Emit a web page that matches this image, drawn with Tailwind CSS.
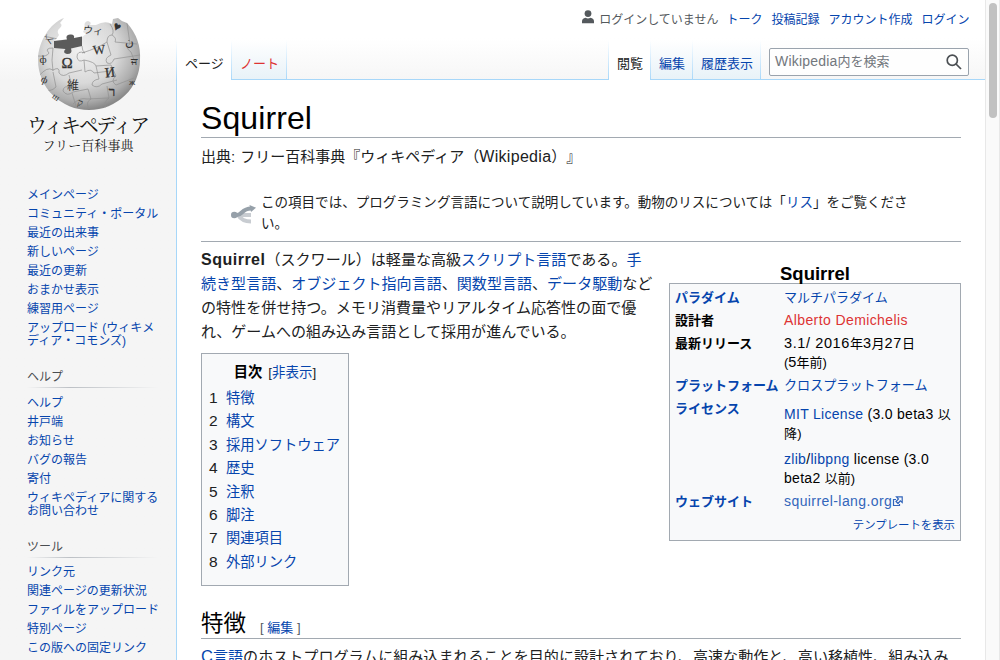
<!DOCTYPE html>
<html lang="ja">
<head>
<meta charset="utf-8">
<title>Squirrel - Wikipedia</title>
<script src="https://cdn.jsdelivr.net/npm/@tailwindcss/browser@4"></script>
</head>
<body class="h-[660px] w-[1000px] overflow-hidden bg-white font-['Liberation_Sans','Noto_Sans_CJK_JP',sans-serif] text-[#202122] [text-spacing-trim:space-all]">
<div class="flex h-[660px] whitespace-nowrap">

  <!-- Sidebar -->
  <aside class="h-full w-44 shrink-0 bg-linear-to-b from-white from-[38px] to-[#f5f5f5] to-[80px] pl-[27px] text-xs leading-[13px] text-[#0645ad]">
    <div class="h-[189px]">
      <svg width="126" height="160" viewBox="27 0 126 160">
        <defs>
          <radialGradient id="globe" cx=".42" cy=".35" r=".65">
            <stop offset="0" stop-color="#f1f1f1"/><stop offset=".55" stop-color="#d9d9d9"/><stop offset=".85" stop-color="#adadad"/><stop offset="1" stop-color="#888"/>
          </radialGradient>
          <clipPath id="ball"><path d="M64 18L60 23Q63 25 60 28Q56 31 59 35Q56 40 54 41L82 37L86 34L83 32L85 28Q83 22 88 21Q92 22 90 25L96 25Q105 20 112 24L113 19L118 18Q122 22 127 23A51 51 0 0 1 140 60A51 50 0 0 1 38 60C38 42 50 23 64 18Z"/></clipPath>
        </defs>
        <path fill="url(#globe)" d="M64 18L60 23Q63 25 60 28Q56 31 59 35Q56 40 54 41L82 37L86 34L83 32L85 28Q83 22 88 21Q92 22 90 25L96 25Q105 20 112 24L113 19L118 18Q122 22 127 23A51 51 0 0 1 140 60A51 50 0 0 1 38 60C38 42 50 23 64 18Z"/>
        <path fill="#5b5b5b" d="M54 41L67 39.5Q65 35 70 34.5Q75 34 74 38L82 36.5L82 46L71 48.5Q73 54 67 54Q62 53 65.5 49L54 48Z"/>
        <g clip-path="url(#ball)" fill="none" stroke="#909090" stroke-width=".7">
          <path d="M38 56Q47 57 49 53Q44 48 53 48M53 48Q51 61 53 71M39 76Q47 66 53 70Q60 66 59 73Q63 78 69 73L82 70M82 46Q82 51 85 53Q77 50 77 57Q78 63 84 60L85 72M82 53Q98 48 107 42Q107 35 112 35Q117 38 115 42L137 44M107 42L111 55Q104 58 107 63Q112 65 114 59L140 55M111 65L116 76Q110 81 116 85L134 78M84 60Q95 62 96 66L111 65M85 72Q91 68 94 73L110 71M96 66L99 79Q92 80 92 85Q97 89 102 84L117 80M69 75L72 87Q63 85 63 91Q67 97 73 92L88 89M53 72L56 87Q50 93 43 89M72 93L76 106M88 89L91 99Q85 102 89 109M107 86L109 98Q103 102 106 109M73 104Q80 97 87 99L109 98M110 24Q115 31 112 35M127 23L130 44Q124 47 131 52L136 65M43 36L58 39M42 89L57 101"/>
        </g>
        <g fill="#333" font-family="Liberation Serif, Noto Sans CJK JP, serif" text-anchor="middle">
          <text x="67" y="68" font-size="15" stroke="#333" stroke-width=".3">Ω</text>
          <text x="99" y="54" font-size="13" transform="rotate(-5 99 50)" stroke="#333" stroke-width=".2">W</text>
          <text x="110" y="77" font-size="14" transform="rotate(-7 110 72)" stroke="#333" stroke-width=".3">И</text>
          <text x="73" y="90" font-size="12">維</text>
          <text x="93" y="34" font-size="10" transform="rotate(6 93 31)">ウィ</text>
          <text x="112" y="96" font-size="13" stroke="#333" stroke-width=".4">ר</text>
          <text x="48" y="43" font-size="9" transform="rotate(24 48 40)">ᔌ</text>
          <text x="43" y="63" font-size="11">ф</text>
          <text x="45" y="83" font-size="10" transform="rotate(25 45 79)">ф</text>
          <text x="117" y="31" font-size="13" transform="rotate(25 117 27)">♥</text>
          <text x="129" y="46" font-size="12">ن</text>
          <text x="134" y="65" font-size="10">ਜ</text>
          <text x="132" y="85" font-size="9">ж</text>
          <text x="56" y="100" font-size="9" transform="rotate(34 56 97)">ш</text>
          <text x="80" y="106" font-size="10" transform="rotate(15 80 103)">ק</text>
        </g>
        <text x="27" y="133" font-size="20" textLength="123" lengthAdjust="spacing" fill="#111" font-family="Noto Serif CJK JP, Noto Sans CJK JP, serif">ウィキペディア</text>
        <text x="42.5" y="150" font-size="13" textLength="91" lengthAdjust="spacing" fill="#222" font-family="Noto Serif CJK JP, Noto Sans CJK JP, serif">フリー百科事典</text>
      </svg>
    </div>
    <nav>
      <ul class="flex flex-col gap-1.5">
        <li>メインページ</li><li>コミュニティ・ポータル</li><li>最近の出来事</li><li>新しいページ</li><li>最近の更新</li><li>おまかせ表示</li><li>練習用ページ</li><li>アップロード (ウィキメ<br>ディア・コモンズ)</li>
      </ul>
      <h3 class="mt-[23px] text-[#4a4d51]">ヘルプ</h3>
      <div class="mt-[3px] h-px w-[131px] bg-linear-to-r from-transparent via-[#bcc0c5] via-33% to-transparent"></div>
      <ul class="mt-[9px] flex flex-col gap-1.5">
        <li>ヘルプ</li><li>井戸端</li><li>お知らせ</li><li>バグの報告</li><li>寄付</li><li>ウィキペディアに関する<br>お問い合わせ</li>
      </ul>
      <h3 class="mt-[23px] text-[#4a4d51]">ツール</h3>
      <div class="mt-[3px] h-px w-[131px] bg-linear-to-r from-transparent via-[#bcc0c5] via-33% to-transparent"></div>
      <ul class="mt-2 flex flex-col gap-1.5">
        <li>リンク元</li><li>関連ページの更新状況</li><li>ファイルをアップロード</li><li>特別ページ</li><li>この版への固定リンク</li>
      </ul>
    </nav>
  </aside>
  <div class="w-px shrink-0 bg-linear-to-b from-white from-[40px] to-[#a7d7f9] to-[80px]"></div>

  <div class="flex w-[808px] shrink-0 flex-col">
    <!-- Header -->
    <header class="h-20 shrink-0 bg-linear-to-b from-white from-[38px] to-[#f6f6f6] text-[#0645ad]">
      <div class="flex h-10 items-start justify-end pr-[15.5px] pt-[11px] text-xs leading-[18px]">
        <svg class="-mt-px mr-[5px]" width="12" height="14" viewBox="0 0 12 14" fill="#54595d"><circle cx="6" cy="3.6" r="3.4"/><path d="M0 13.3V11.5Q0 8.3 3.6 7.8Q6 9.3 8.4 7.8Q12 8.3 12 11.5V13.3Z"/></svg>
        <span class="mr-2 text-[#54595d]">ログインしていません</span><span class="mr-[9px]">トーク</span><span class="mr-[9px]">投稿記録</span><span class="mr-[9px]">アカウント作成</span><span>ログイン</span>
      </div>
      <div class="flex h-10 text-[13px] leading-[48px]">
        <div class="w-[54px] bg-white pl-2 text-[#202122]">ページ</div>
        <div class="w-px bg-linear-to-b from-white to-[#a7d7f9]"></div>
        <div class="h-10 w-[54px] border-b border-[#a7d7f9] bg-linear-to-b from-white to-[#e8f2f8] pl-2 text-[#dd3333]">ノート</div>
        <div class="w-px bg-linear-to-b from-white to-[#a7d7f9]"></div>
        <div class="flex-1 border-b border-[#a7d7f9]"></div>
        <div class="w-px bg-linear-to-b from-white to-[#a7d7f9]"></div>
        <div class="w-[41px] bg-white pl-2 text-[#202122]">閲覧</div>
        <div class="w-px bg-linear-to-b from-white to-[#a7d7f9]"></div>
        <div class="h-10 w-[41px] border-b border-[#a7d7f9] bg-linear-to-b from-white to-[#e8f2f8] pl-2">編集</div>
        <div class="w-px bg-linear-to-b from-white to-[#a7d7f9]"></div>
        <div class="h-10 w-[67px] border-b border-[#a7d7f9] bg-linear-to-b from-white to-[#e8f2f8] pl-2">履歴表示</div>
        <div class="w-px bg-linear-to-b from-white to-[#a7d7f9]"></div>
        <div class="flex w-[224px] border-b border-[#a7d7f9] pl-2 pt-2">
          <div class="flex h-7 w-[200px] items-center justify-between rounded-[2px] border border-[#9aa3ad] bg-white/80 pl-[5px] pr-[6px] leading-[26px] text-[#72777d]">
            <span class="-mt-px"><span class="text-[14px] tracking-[0.2px]">Wikipedia</span>内を検索</span>
            <svg width="16" height="16" viewBox="0 0 16 16" fill="none" stroke="#4b4f53" stroke-width="1.7"><circle cx="6.3" cy="6.3" r="5.1"/><path d="M10 10L15 15"/></svg>
          </div>
        </div>
      </div>
    </header>

    <!-- Article -->
    <main class="h-[580px] w-[784px] overflow-hidden pl-6 text-[15px] leading-6">
      <h1 class="h-[58px] border-b border-[#a2a9b1] pt-[18px] text-[32px] leading-10 tracking-[0.1px] text-black">Squirrel</h1>
      <p class="mt-[7px]">出典: <span class="pl-px">フリー百科事典『ウィキペディア（<span class="text-[16px] tracking-[0.3px]">Wikipedia</span>）』</span></p>
      <div class="mt-[23px] flex h-[50px] border-b border-[#a2a9b1] pl-[30px] text-[13.54px] leading-[21px]">
        <svg class="mr-[5px] mt-[13px]" width="25" height="20" viewBox="0 0 25 20" fill="none"><path d="M3 10H20M7 10Q11 16.5 20 16.5" stroke="#c8ccd1" stroke-width="4"/><path d="M3 10H6C11 10 11 3.5 20 3.5" stroke="#96a0a9" stroke-width="4.2"/><circle cx="3.3" cy="10" r="3.3" fill="#96a0a9"/><path d="M18.5 0L25 2.7L20 7Z" fill="#96a0a9"/></svg>
        <p>この項目では、プログラミング言語について説明しています。動物のリスについては「<a class="text-[#0645ad]">リス</a>」をご覧くださ<br>い。</p>
      </div>

      <div class="flex h-[365px] justify-between">
        <div>
          <p class="mt-[6px] text-[15.05px]"><b class="text-[16px] tracking-[0.5px]">Squirrel</b>（スクワール）は軽量な高級<a class="text-[#0645ad]">スクリプト言語</a>である。<a class="text-[#0645ad]">手<br>続き型言語</a>、<a class="text-[#0645ad]">オブジェクト指向言語</a>、<a class="text-[#0645ad]">関数型言語</a>、<a class="text-[#0645ad]">データ駆動</a>など<br>の特性を併せ持つ。メモリ消費量やリアルタイム応答性の面で優<br>れ、ゲームへの組み込み言語として採用が進んでいる。</p>
          <div class="mt-[9px] h-[233px] w-[148px] border border-[#a2a9b1] bg-[#f8f9fa] px-[7px] pt-[7px] text-[14.25px] leading-[23.4px]">
            <div class="text-center"><b class="mr-0.5 text-black">目次</b> <span class="text-[13.5px]">[<a class="text-[#0645ad]">非表示</a>]</span></div>
            <ul class="mt-[2.5px]">
              <li class="flex"><span class="-mt-px w-[17px] text-[15.5px]">1</span><a class="text-[#0645ad]">特徴</a></li>
              <li class="flex"><span class="-mt-px w-[17px] text-[15.5px]">2</span><a class="text-[#0645ad]">構文</a></li>
              <li class="flex"><span class="-mt-px w-[17px] text-[15.5px]">3</span><a class="text-[#0645ad]">採用ソフトウェア</a></li>
              <li class="flex"><span class="-mt-px w-[17px] text-[15.5px]">4</span><a class="text-[#0645ad]">歴史</a></li>
              <li class="flex"><span class="-mt-px w-[17px] text-[15.5px]">5</span><a class="text-[#0645ad]">注釈</a></li>
              <li class="flex"><span class="-mt-px w-[17px] text-[15.5px]">6</span><a class="text-[#0645ad]">脚注</a></li>
              <li class="flex"><span class="-mt-px w-[17px] text-[15.5px]">7</span><a class="text-[#0645ad]">関連項目</a></li>
              <li class="flex"><span class="-mt-px w-[17px] text-[15.5px]">8</span><a class="text-[#0645ad]">外部リンク</a></li>
            </ul>
          </div>
        </div>

        <div class="w-[292px] pt-[21px] text-[13px] leading-[19px] text-black">
          <div class="h-5 text-center text-[18.5px] leading-[22px] font-bold">Squirrel</div>
          <div class="h-[258px] border border-[#a2a9b1] bg-[#f8f9fa] px-[5px] pt-1">
            <dl class="grid grid-cols-[109px_1fr] gap-y-1">
              <dt class="font-bold text-[#0645ad]">パラダイム</dt><dd class="text-[#0645ad]">マルチパラダイム</dd>
              <dt class="font-bold">設計者</dt><dd class="text-[14px] tracking-[0.4px] text-[#dd3333]">Alberto Demichelis</dd>
              <dt class="font-bold">最新リリース</dt><dd><span class="text-[14.5px] tracking-[0.6px]">3.1/ 2016</span>年<span class="text-[14.5px] tracking-[0.6px]">3</span>月<span class="text-[14.5px] tracking-[0.6px]">27</span>日<br>(<span class="text-[14.5px]">5</span>年前)</dd>
              <dt class="font-bold text-[#0645ad]">プラットフォーム</dt><dd class="text-[13.1px] text-[#0645ad]">クロスプラットフォーム</dd>
              <dt class="font-bold text-[#0645ad]">ライセンス</dt>
              <dd class="pt-1.5 text-[14px] tracking-[0.3px]"><p><a class="text-[#0645ad]">MIT License</a> (3.0 beta3 <span class="text-[13px]">以</span><br><span class="text-[13px]">降)</span></p><p class="mt-[7px]"><a class="text-[#0645ad]">zlib</a>/<a class="text-[#0645ad]">libpng</a> license (3.0<br>beta2 <span class="text-[13px] tracking-normal">以前)</span></p></dd>
              <dt class="font-bold text-[#0645ad]">ウェブサイト</dt>
              <dd class="flex items-center text-[#3366bb]"><span class="text-[14px] tracking-[0.42px]">squirrel-lang.org</span><svg class="-mt-px" width="11" height="11" viewBox="0 0 11 11" fill="none" stroke="#3366bb" stroke-width="1.2"><path d="M4 3.5H1.5V9.5H7.5V8M4.5 .8H10.2V6.5L8.3 4.8L6 7.5L4 5.5L6.5 3Z"/></svg></dd>
            </dl>
            <div class="mt-1 text-right text-[11.4px] leading-[21px] text-[#0645ad]">テンプレートを表示</div>
          </div>
        </div>
      </div>

      <h2 class="flex h-[32px] items-start border-b border-[#a2a9b1] text-[22.5px] leading-[34px] text-black">特徴<span class="ml-[14px] pt-1 text-[13px] text-[#54595d]">[ <a class="text-[#0645ad]">編集</a> ]</span></h2>
      <p class="mt-[5px] text-[15.07px]"><a class="text-[#0645ad]"><span class="text-[16.5px]">C</span>言語</a>のホストプログラムに組み込まれることを目的に設計されており、高速な動作と、高い移植性、組み込み</p>
    </main>
  </div>

  <!-- Scrollbar -->
  <div class="w-[15px] border-x border-[#e8e8e8] bg-[#fafafa] pl-[3px] pt-[3px]"><div class="h-[115px] w-2 rounded-full bg-[#c1c1c1]"></div></div>
</div>
</body>
</html>
